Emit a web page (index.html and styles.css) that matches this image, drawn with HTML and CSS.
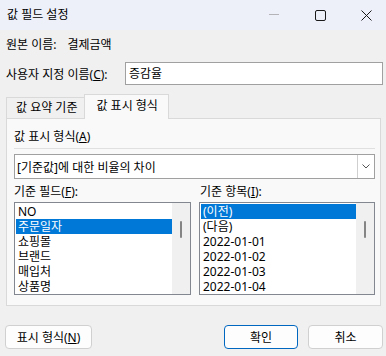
FILE: index.html
```html
<!DOCTYPE html>
<html lang="ko">
<head>
    <meta charset="UTF-8">
    <meta name="viewport" content="width=device-width, initial-scale=1.0">
    <title>값 필드 설정</title>
    <link rel="stylesheet" href="styles.css">
</head>
<body>
    <div class="window">
        <div class="titlebar">
            <span class="title">값 필드 설정</span>
            <div class="caption-btns">
                <span class="caption-btn">
                    <svg width="10" height="10" viewBox="0 0 10 10"><path d="M0 4.5h10" stroke="#b4b4b8" stroke-width="1"/></svg>
                </span>
                <span class="caption-btn">
                    <svg width="11" height="11" viewBox="0 0 11 11"><rect x="0.5" y="0.5" width="10" height="10" rx="1.5" fill="none" stroke="#1a1a1a" stroke-width="1"/></svg>
                </span>
                <span class="caption-btn">
                    <svg width="11" height="11" viewBox="0 0 11 11"><path d="M0.5 0.5l10 10M10.5 0.5l-10 10" stroke="#1a1a1a" stroke-width="1"/></svg>
                </span>
            </div>
        </div>

        <div class="content">
            <div class="source-row">원본 이름:<span class="source-name">결제금액</span></div>

            <div class="name-row">
                <span>사용자 지정 이름(<u>C</u>):</span>
                <div class="text-input">증감율</div>
            </div>

            <div class="tabs">
                <div class="tab">값 요약 기준</div>
                <div class="tab active">값 표시 형식</div>
            </div>

            <div class="tab-panel">
                <div class="group-label">값 표시 형식(<u>A</u>)</div>
                <div class="separator"></div>
                <div class="combo">
                    <span class="combo-text">[기준값]에 대한 비율의 차이</span>
                    <span class="combo-btn">
                        <svg width="8" height="5" viewBox="0 0 8 5"><path d="M0.5 0.5l3.5 3.5 3.5-3.5" fill="none" stroke="#555" stroke-width="1"/></svg>
                    </span>
                </div>

                <div class="lists">
                    <div class="list-col left">
                        <div class="list-label">기준 필드(<u>F</u>):</div>
                        <div class="listbox">
                            <div class="items">
                                <div class="item">NO</div>
                                <div class="item selected">주문일자</div>
                                <div class="item">쇼핑몰</div>
                                <div class="item">브랜드</div>
                                <div class="item">매입처</div>
                                <div class="item">상품명</div>
                            </div>
                            <div class="scroll-track"><span class="scroll-thumb"></span></div>
                        </div>
                    </div>
                    <div class="list-col right">
                        <div class="list-label">기준 항목(<u>I</u>):</div>
                        <div class="listbox">
                            <div class="items">
                                <div class="item selected">(이전)</div>
                                <div class="item">(다음)</div>
                                <div class="item">2022-01-01</div>
                                <div class="item">2022-01-02</div>
                                <div class="item">2022-01-03</div>
                                <div class="item">2022-01-04</div>
                            </div>
                            <div class="scroll-track"><span class="scroll-thumb"></span></div>
                        </div>
                    </div>
                </div>
            </div>

            <div class="footer">
                <button class="btn format-btn">표시 형식(<u>N</u>)</button>
                <button class="btn primary">확인</button>
                <button class="btn">취소</button>
            </div>
        </div>
    </div>
</body>
</html>
```

FILE: styles.css
```css
body {
    margin: 0;
    font-family: "Noto Sans", "Noto Sans CJK KR", sans-serif;
    font-size: 12px;
    color: #000;
    background-color: #f0f0f0;
}
.window {
    width: 386px;
    height: 356px;
    overflow: hidden;
    background-color: #f0f0f0;
}
.titlebar {
    height: 30px;
    display: flex;
    align-items: center;
    background-color: #eef0f9;
}
.title {
    padding-left: 7px;
    line-height: 16px;
}
.caption-btns {
    display: flex;
    margin-left: auto;
    margin-right: -3px;
}
.caption-btn {
    width: 46px;
    height: 30px;
    display: flex;
    align-items: center;
    justify-content: center;
}
.content {
    padding-left: 6px;
}
.source-row {
    margin-top: 7px;
    line-height: 16px;
}
.source-name {
    margin-left: 11px;
}
.name-row {
    width: 377px;
    margin-top: 9px;
    display: flex;
    align-items: center;
    justify-content: space-between;
}
.text-input {
    width: 258px;
    height: 23px;
    box-sizing: border-box;
    border: 1px solid #a0a0a0;
    background-color: #fff;
    padding: 0 3px;
    line-height: 21px;
}
.tabs {
    margin-top: 9px;
    height: 24px;
    display: flex;
    align-items: flex-end;
}
.tab {
    height: 21px;
    box-sizing: border-box;
    border: 1px solid #d9d9d9;
    border-bottom: none;
    background-color: #f0f0f0;
    padding: 0 7px 0 9px;
    line-height: 20px;
}
.tab.active {
    height: 25px;
    margin-bottom: -1px;
    margin-left: -1px;
    padding: 0 10px 0 11px;
    line-height: 22px;
    background-color: #f9f9f9;
    position: relative;
    z-index: 1;
}
.tab-panel {
    width: 375px;
    height: 188px;
    box-sizing: border-box;
    border: 1px solid #d9d9d9;
    background-color: #f9f9f9;
    padding: 10px 5px 0 7px;
}
.group-label {
    line-height: 16px;
}
.separator {
    margin-top: 3px;
    height: 1px;
    background-color: #e0e0e0;
}
.combo {
    margin-top: 5px;
    height: 25px;
    box-sizing: border-box;
    border: 1px solid #a0a0a0;
    background-color: #fff;
    display: flex;
    align-items: center;
}
.combo-text {
    padding-left: 2px;
    flex: 1;
}
.combo-btn {
    width: 17px;
    height: 23px;
    box-sizing: border-box;
    border-left: 1px solid #cfcfcf;
    display: flex;
    align-items: center;
    justify-content: center;
}
.lists {
    margin-top: 5px;
    display: flex;
    gap: 8px;
}
.list-col.left {
    width: 177px;
}
.list-col.right {
    width: 176px;
}
.list-col.right .list-label {
    padding-left: 1px;
}
.list-label {
    line-height: 16px;
}
.listbox {
    margin-top: 2px;
    height: 93px;
    box-sizing: border-box;
    border: 1px solid #828790;
    background-color: #fff;
    display: flex;
}
.items {
    flex: 1;
    padding: 1px 0 0 1px;
}
.item {
    height: 15px;
    line-height: 15px;
    padding-left: 2px;
    white-space: nowrap;
}
.item.selected {
    background-color: #0078d7;
    color: #fff;
}
.scroll-track {
    width: 18px;
    background-color: #f0f0f0;
    display: flex;
    justify-content: center;
}
.scroll-thumb {
    margin-top: 18px;
    width: 2px;
    height: 17px;
    border-radius: 1px;
    background-color: #858585;
}
.footer {
    width: 377px;
    margin-top: 19px;
    display: flex;
}
.btn {
    height: 24px;
    box-sizing: border-box;
    font-family: inherit;
    font-size: 12px;
    color: #000;
    background-color: #fdfdfd;
    border: 1px solid #d0d0d0;
    border-radius: 4px;
    padding: 0;
    width: 75px;
}
.btn.format-btn {
    width: 87px;
    margin-left: -1px;
}
.btn.primary {
    margin-left: auto;
    margin-right: 10px;
    width: 74px;
    border-color: #0067c0;
}
```
